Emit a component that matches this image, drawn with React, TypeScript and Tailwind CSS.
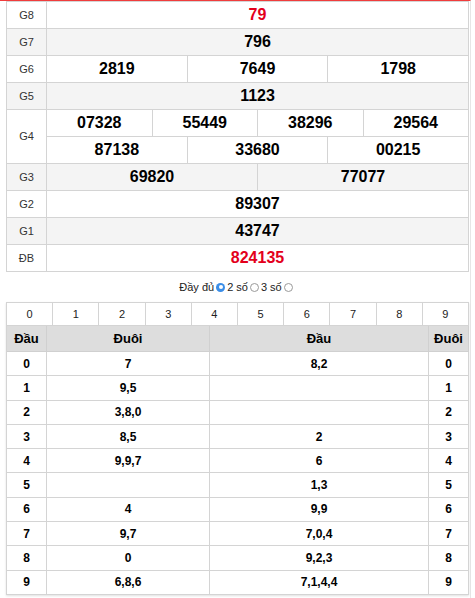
import React from "react";

const F = { fontFamily: '"Liberation Sans", Arial, sans-serif' };

type Row = { label: string; cells: string[][]; red?: boolean; gray: boolean };

const prizes: Row[] = [
  { label: "G8", cells: [["79"]], red: true, gray: false },
  { label: "G7", cells: [["796"]], gray: true },
  { label: "G6", cells: [["2819", "7649", "1798"]], gray: false },
  { label: "G5", cells: [["1123"]], gray: true },
  { label: "G4", cells: [["07328", "55449", "38296", "29564"], ["87138", "33680", "00215"]], gray: false },
  { label: "G3", cells: [["69820", "77077"]], gray: true },
  { label: "G2", cells: [["89307"]], gray: false },
  { label: "G1", cells: [["43747"]], gray: true },
  { label: "ĐB", cells: [["824135"]], red: true, gray: false },
];

const loto: [string, string, string, string][] = [
  ["0", "7", "8,2", "0"],
  ["1", "9,5", "", "1"],
  ["2", "3,8,0", "", "2"],
  ["3", "8,5", "2", "3"],
  ["4", "9,9,7", "6", "4"],
  ["5", "", "1,3", "5"],
  ["6", "4", "9,9", "6"],
  ["7", "9,7", "7,0,4", "7"],
  ["8", "0", "9,2,3", "8"],
  ["9", "6,8,6", "7,1,4,4", "9"],
];

function Radio({ checked }: { checked?: boolean }) {
  return checked ? (
    <span className="inline-flex items-center justify-center w-[9px] h-[9px] rounded-full bg-[#3b8ee8] mx-[2px]">
      <span className="w-[4px] h-[4px] rounded-full bg-white" />
    </span>
  ) : (
    <span className="inline-block w-[9px] h-[9px] rounded-full border border-[#9a9a9a] bg-white mx-[2px]" />
  );
}

export default function App() {
  return (
    <div className="w-[475px] bg-white" style={F}>
      <div className="w-[471px] border-t border-[#f03c3c] border-r border-r-[#e6e6e6] pl-[6px] pb-[4px]">
        {/* prize table */}
        <div className="w-[463px] border-l border-t border-[#d4d4d4]">
          {prizes.map((p) => (
            <div key={p.label} className={`flex ${p.gray ? "bg-[#f4f4f4]" : "bg-white"}`}>
              <div className="w-[40px] shrink-0 flex items-center justify-center border-r border-b border-[#d4d4d4] text-[11px] text-[#333]">
                {p.label}
              </div>
              <div className="flex-1 flex flex-col">
                {p.cells.map((line, li) => (
                  <div key={li} className="flex h-[27px]">
                    {line.map((n, ni) => (
                      <div
                        key={ni}
                        className={`flex-1 flex items-center justify-center border-r border-b border-[#d4d4d4] text-[16px] font-bold ${
                          p.red ? "text-[#e3001b]" : "text-black"
                        }`}
                      >
                        {n}
                      </div>
                    ))}
                  </div>
                ))}
              </div>
            </div>
          ))}
        </div>

        {/* radio row */}
        <div className="h-[30px] flex items-center justify-center text-[11px] text-[#222] pr-[2px]">
          <span>Đầy đủ</span>
          <Radio checked />
          <span>2 số</span>
          <Radio />
          <span>3 số</span>
          <Radio />
        </div>

        {/* loto table */}
        <div className="w-[463px] border-l border-t border-[#d4d4d4] shadow-[0_1px_2px_rgba(0,0,0,0.12)]">
          <div className="grid grid-cols-10 h-[23px] bg-white">
            {["0", "1", "2", "3", "4", "5", "6", "7", "8", "9"].map((d) => (
              <div key={d} className="flex items-center justify-center border-r border-b border-[#d4d4d4] text-[11px] text-[#222]">
                {d}
              </div>
            ))}
          </div>
          <div className="grid grid-cols-[40px_163px_219px_40px] h-[26px] bg-[#dddddd] text-[13px] font-bold text-black">
            <div className="flex items-center justify-center border-r border-b border-[#d0d0d0]">Đầu</div>
            <div className="flex items-center justify-center border-r border-b border-[#d0d0d0]">Đuôi</div>
            <div className="flex items-center justify-center border-r border-b border-[#d0d0d0]">Đầu</div>
            <div className="flex items-center justify-center border-r border-b border-[#d0d0d0]">Đuôi</div>
          </div>
          {loto.map((r) => (
            <div key={r[0]} className="grid grid-cols-[40px_163px_219px_40px] h-[24.3px] bg-white text-[12px] font-bold text-black">
              {r.map((c, i) => (
                <div key={i} className="flex items-center justify-center border-r border-b border-[#d4d4d4]">
                  {c}
                </div>
              ))}
            </div>
          ))}
        </div>
      </div>
    </div>
  );
}
